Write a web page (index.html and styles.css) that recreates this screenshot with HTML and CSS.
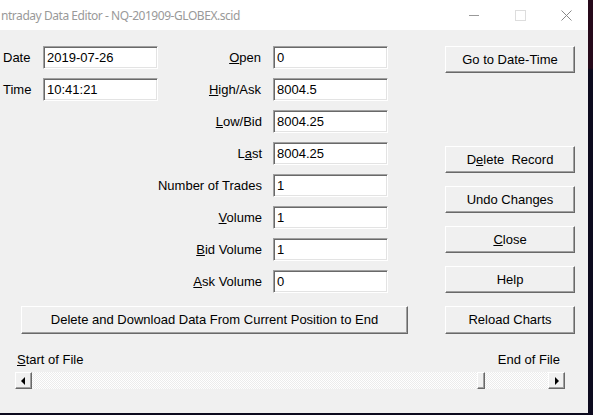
FILE: index.html
```html
<!DOCTYPE html>
<html lang="en">

<head>
    <meta charset="UTF-8">
    <title>Intraday Data Editor</title>
    <link rel="stylesheet" href="styles.css">
</head>

<body>
    <div class="window">

        <div class="titlebar">
            <span class="title">ntraday Data Editor - NQ-201909-GLOBEX.scid</span>
            <span class="ctl">
                <svg width="10" height="10" viewBox="0 0 10 10"><path d="M0 5.5h10" stroke="#999" stroke-width="1"/></svg>
            </span>
            <span class="ctl">
                <svg width="11" height="11" viewBox="0 0 11 11"><rect x="0.5" y="0.5" width="10" height="10" fill="none" stroke="#ddd"/></svg>
            </span>
            <span class="ctl">
                <svg width="11" height="11" viewBox="0 0 11 11"><path d="M0.5 0.5l10 10M10.5 0.5l-10 10" stroke="#888" stroke-width="1"/></svg>
            </span>
        </div>

        <div class="client">
            <div class="left">
                <div class="fields">
                    <label class="lbl-left">Date</label>
                    <input class="edit" type="text" value="2019-07-26">
                    <label class="lbl"><u>O</u>pen</label>
                    <input class="edit" type="text" value="0">

                    <label class="lbl-left">Time</label>
                    <input class="edit" type="text" value="10:41:21">
                    <label class="lbl"><u>H</u>igh/Ask</label>
                    <input class="edit" type="text" value="8004.5">

                    <label class="lbl wide"><u>L</u>ow/Bid</label>
                    <input class="edit" type="text" value="8004.25">

                    <label class="lbl wide">L<u>a</u>st</label>
                    <input class="edit" type="text" value="8004.25">

                    <label class="lbl wide">Number of Trades</label>
                    <input class="edit" type="text" value="1">

                    <label class="lbl wide"><u>V</u>olume</label>
                    <input class="edit" type="text" value="1">

                    <label class="lbl wide"><u>B</u>id Volume</label>
                    <input class="edit" type="text" value="1">

                    <label class="lbl wide"><u>A</u>sk Volume</label>
                    <input class="edit" type="text" value="0">
                </div>

                <button class="btn download">Delete and Download Data From Current Position to End</button>
            </div>

            <div class="actions">
                <button class="btn">Go to Date-Time</button>
                <button class="btn first">D<u>e</u>lete&nbsp; Record</button>
                <button class="btn">Undo Changes</button>
                <button class="btn"><u>C</u>lose</button>
                <button class="btn">Help</button>
                <button class="btn tall">Reload Charts</button>
            </div>
        </div>

        <div class="file-nav">
            <span><u>S</u>tart of File</span>
            <span>End of File</span>
        </div>

        <div class="scrollbar">
            <span class="arrow"><i class="tri-left"></i></span>
            <div class="track">
                <span class="thumb" style="margin-left: 445px;"></span>
            </div>
            <span class="arrow"><i class="tri-right"></i></span>
        </div>

    </div>
</body>

</html>
```

FILE: styles.css
```css
* {
    margin: 0;
    padding: 0;
    box-sizing: border-box;
}
body{
    width: 593px;
    height: 415px;
    overflow: hidden;
    background: linear-gradient(to bottom, #26091a 0, #26091a 68px, #0c0a1e 70px, #0c0a1e 100%);
    font-family: 'Liberation Sans', Arial, sans-serif;
    font-size: 13px;
    color: #000;
}
.window{
    width: 588px;
    height: 413px;
    background-color: #f0f0f0;
    overflow: hidden;
}
.titlebar{
    height: 30px;
    background-color: #ffffff;
    display: flex;
    align-items: center;
}
.title{
    flex: 1;
    padding-left: 1px;
    font-family: 'Noto Sans', 'Open Sans', sans-serif;
    font-size: 12px;
    letter-spacing: -0.45px;
    color: #999;
    white-space: nowrap;
}
.ctl{
    width: 46px;
    height: 30px;
    display: flex;
    align-items: center;
    justify-content: center;
}
.ctl:last-child{
    margin-right: -1px;
}
.client{
    display: flex;
    padding-top: 16px;
}
.left{
    width: 407px;
}
.fields{
    display: grid;
    grid-template-columns: 40px 115px 115px 115px;
    grid-auto-rows: 23px;
    row-gap: 9px;
    padding-left: 3px;
}
.lbl, .lbl-left{
    line-height: 24px;
    white-space: nowrap;
}
.lbl{
    text-align: right;
    padding-right: 12px;
}
.lbl.wide{
    grid-column: 1 / 4;
    padding-right: 11px;
}
.edit{
    height: 23px;
    width: 115px;
    border: 1px solid;
    border-color: #a0a0a0 #ffffff #ffffff #a0a0a0;
    box-shadow: inset 1px 1px #696969, inset -1px -1px #e3e3e3;
    background-color: #ffffff;
    padding-left: 3px;
    font-family: inherit;
    font-size: 13px;
    line-height: 21px;
    color: #000;
    outline: none;
}
.btn{
    display: block;
    width: 130px;
    height: 27px;
    border: 1px solid;
    border-color: #ffffff #696969 #696969 #ffffff;
    box-shadow: inset -1px -1px #a0a0a0;
    background-color: #f0f0f0;
    font-family: inherit;
    font-size: 13px;
    color: #000;
    padding-bottom: 1px;
}
.download{
    width: 387px;
    height: 28px;
    margin: 13px 0 0 21px;
}
.actions{
    margin-left: 38px;
    display: flex;
    flex-direction: column;
    gap: 13px;
}
.actions .first{
    margin-top: 60px;
}
.actions .tall{
    height: 28px;
}
.file-nav{
    display: flex;
    justify-content: space-between;
    margin-top: 18px;
    padding: 0 28px 0 17px;
    line-height: 16px;
}
.scrollbar{
    display: flex;
    width: 550px;
    height: 17px;
    margin: 4px 0 0 15px;
}
.arrow, .thumb{
    width: 17px;
    height: 17px;
    border: 1px solid;
    border-color: #ffffff #696969 #696969 #ffffff;
    box-shadow: inset -1px -1px #a0a0a0;
    background-color: #f0f0f0;
    display: flex;
    align-items: center;
    justify-content: center;
}
.thumb{
    width: 8px;
}
.track{
    flex: 1;
    display: flex;
    background: repeating-conic-gradient(#ffffff 0 25%, #ececec 0 50%) 0 0 / 2px 2px;
}
.tri-left, .tri-right{
    width: 0;
    height: 0;
    border-top: 4px solid transparent;
    border-bottom: 4px solid transparent;
}
.tri-left{
    border-right: 4px solid #000;
    margin-right: 1px;
}
.tri-right{
    border-left: 4px solid #000;
    margin-left: 1px;
}
```
